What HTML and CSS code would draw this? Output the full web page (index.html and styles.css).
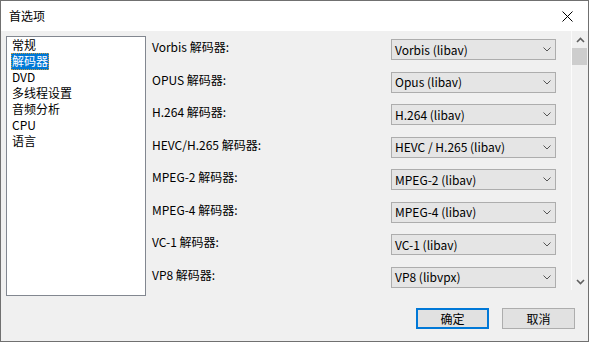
FILE: index.html
```html
<!DOCTYPE html>
<html lang="zh-CN">
<head>
  <meta charset="UTF-8" />
  <title>首选项</title>
  <link rel="stylesheet" href="styles.css">
</head>
<body>
  <div class="window">
    <div class="titlebar">
      <span class="title">首选项</span>
      <span class="close">
        <svg width="11" height="11" viewBox="0 0 11 11"><path d="M0.5 0.5 L10.5 10.5 M10.5 0.5 L0.5 10.5" stroke="#000" stroke-width="1" fill="none"/></svg>
      </span>
    </div>
    <div class="content">
      <div class="main">
        <ul class="nav">
          <li><span>常规</span></li>
          <li class="selected"><span>解码器</span></li>
          <li><span>DVD</span></li>
          <li><span>多线程设置</span></li>
          <li><span>音频分析</span></li>
          <li><span>CPU</span></li>
          <li><span>语言</span></li>
        </ul>
        <div class="pane">
          <div class="rows">
            <div class="row"><label>Vorbis 解码器:</label><div class="select"><span>Vorbis (libav)</span><svg class="caret" width="8" height="5" viewBox="0 0 8 5"><polyline points="0.5,0.5 4,4 7.5,0.5" fill="none" stroke="#555" stroke-width="1"/></svg></div></div>
            <div class="row"><label>OPUS 解码器:</label><div class="select"><span>Opus (libav)</span><svg class="caret" width="8" height="5" viewBox="0 0 8 5"><polyline points="0.5,0.5 4,4 7.5,0.5" fill="none" stroke="#555" stroke-width="1"/></svg></div></div>
            <div class="row"><label>H.264 解码器:</label><div class="select"><span>H.264 (libav)</span><svg class="caret" width="8" height="5" viewBox="0 0 8 5"><polyline points="0.5,0.5 4,4 7.5,0.5" fill="none" stroke="#555" stroke-width="1"/></svg></div></div>
            <div class="row"><label>HEVC/H.265 解码器:</label><div class="select"><span>HEVC / H.265 (libav)</span><svg class="caret" width="8" height="5" viewBox="0 0 8 5"><polyline points="0.5,0.5 4,4 7.5,0.5" fill="none" stroke="#555" stroke-width="1"/></svg></div></div>
            <div class="row"><label>MPEG-2 解码器:</label><div class="select"><span>MPEG-2 (libav)</span><svg class="caret" width="8" height="5" viewBox="0 0 8 5"><polyline points="0.5,0.5 4,4 7.5,0.5" fill="none" stroke="#555" stroke-width="1"/></svg></div></div>
            <div class="row"><label>MPEG-4 解码器:</label><div class="select"><span>MPEG-4 (libav)</span><svg class="caret" width="8" height="5" viewBox="0 0 8 5"><polyline points="0.5,0.5 4,4 7.5,0.5" fill="none" stroke="#555" stroke-width="1"/></svg></div></div>
            <div class="row"><label>VC-1 解码器:</label><div class="select"><span>VC-1 (libav)</span><svg class="caret" width="8" height="5" viewBox="0 0 8 5"><polyline points="0.5,0.5 4,4 7.5,0.5" fill="none" stroke="#555" stroke-width="1"/></svg></div></div>
            <div class="row"><label>VP8 解码器:</label><div class="select"><span>VP8 (libvpx)</span><svg class="caret" width="8" height="5" viewBox="0 0 8 5"><polyline points="0.5,0.5 4,4 7.5,0.5" fill="none" stroke="#555" stroke-width="1"/></svg></div></div>
          </div>
          <div class="scrollbar">
            <div class="arrow">
              <svg width="9" height="6" viewBox="0 0 9 6"><polyline points="1,5 4.5,1.5 8,5" fill="none" stroke="#606060" stroke-width="1.6"/></svg>
            </div>
            <div class="thumb"></div>
            <div class="track"></div>
            <div class="arrow">
              <svg width="9" height="6" viewBox="0 0 9 6"><polyline points="1,1 4.5,4.5 8,1" fill="none" stroke="#606060" stroke-width="1.6"/></svg>
            </div>
          </div>
        </div>
      </div>
      <div class="footer">
        <button class="btn primary">确定</button>
        <button class="btn">取消</button>
      </div>
    </div>
  </div>
</body>
</html>
```

FILE: styles.css
```css
html, body {
  margin: 0;
  padding: 0;
}
body {
  width: 589px;
  height: 342px;
  overflow: hidden;
}
.window {
  box-sizing: border-box;
  width: 589px;
  height: 342px;
  border: 1px solid #707070;
  display: flex;
  flex-direction: column;
  font-family: "Noto Sans CJK SC", "Liberation Sans", sans-serif;
  font-size: 12px;
  color: #000;
}
.titlebar {
  height: 30px;
  background: #fff;
  display: flex;
  align-items: center;
  justify-content: space-between;
  padding-left: 8px;
}
.title {
  line-height: 16px;
}
.close {
  width: 34px;
  height: 30px;
  display: flex;
  align-items: center;
  justify-content: center;
  margin-right: 4px;
}
.content {
  flex: 1;
  background: #f0f0f0;
  display: flex;
  flex-direction: column;
}
.main {
  display: flex;
  align-items: flex-start;
}
.nav {
  box-sizing: border-box;
  list-style: none;
  margin: 5px 0 0 5px;
  padding: 0 0 0 4px;
  width: 140px;
  height: 260px;
  background: #fff;
  border: 1px solid #828790;
}
.nav li {
  height: 16px;
  line-height: 16px;
}
.nav li span {
  display: inline-block;
  padding: 0 1px;
}
.nav li.selected span {
  background: #0078d7;
  color: #fff;
  height: 17px;
  outline: 1px dotted #c89a3c;
  outline-offset: -1px;
}
.pane {
  flex: 1;
  height: 259px;
  display: flex;
}
.rows {
  flex: 1;
  padding: 8px 15px 0 6px;
  display: flex;
  flex-direction: column;
  gap: 11.5px;
}
.row {
  height: 21px;
  display: flex;
  justify-content: space-between;
  align-items: flex-start;
}
.row label {
  line-height: 16px;
}
.select {
  box-sizing: border-box;
  width: 165px;
  height: 21px;
  border: 1px solid #adadad;
  background: #e5e5e5;
  padding: 0 4px 0 3px;
  display: flex;
  align-items: center;
  justify-content: space-between;
  line-height: 16px;
}
.scrollbar {
  box-sizing: border-box;
  width: 17px;
  border-left: 1px solid #fbfbfb;
  display: flex;
  flex-direction: column;
}
.arrow {
  height: 17px;
  display: flex;
  align-items: center;
  justify-content: center;
}
.thumb {
  height: 17px;
  width: 15px;
  background: #cdcdcd;
}
.track {
  flex: 1;
}
.footer {
  display: flex;
  justify-content: flex-end;
  gap: 13px;
  padding: 12px 13px 0 0;
}
.btn {
  box-sizing: border-box;
  width: 73px;
  height: 21px;
  background: #e1e1e1;
  border: 1px solid #adadad;
  font-family: "Noto Sans CJK SC", "Liberation Sans", sans-serif;
  font-size: 12px;
  color: #000;
  padding: 0;
  line-height: 16px;
}
.btn.primary {
  border: 2px solid #0078d7;
}
```
